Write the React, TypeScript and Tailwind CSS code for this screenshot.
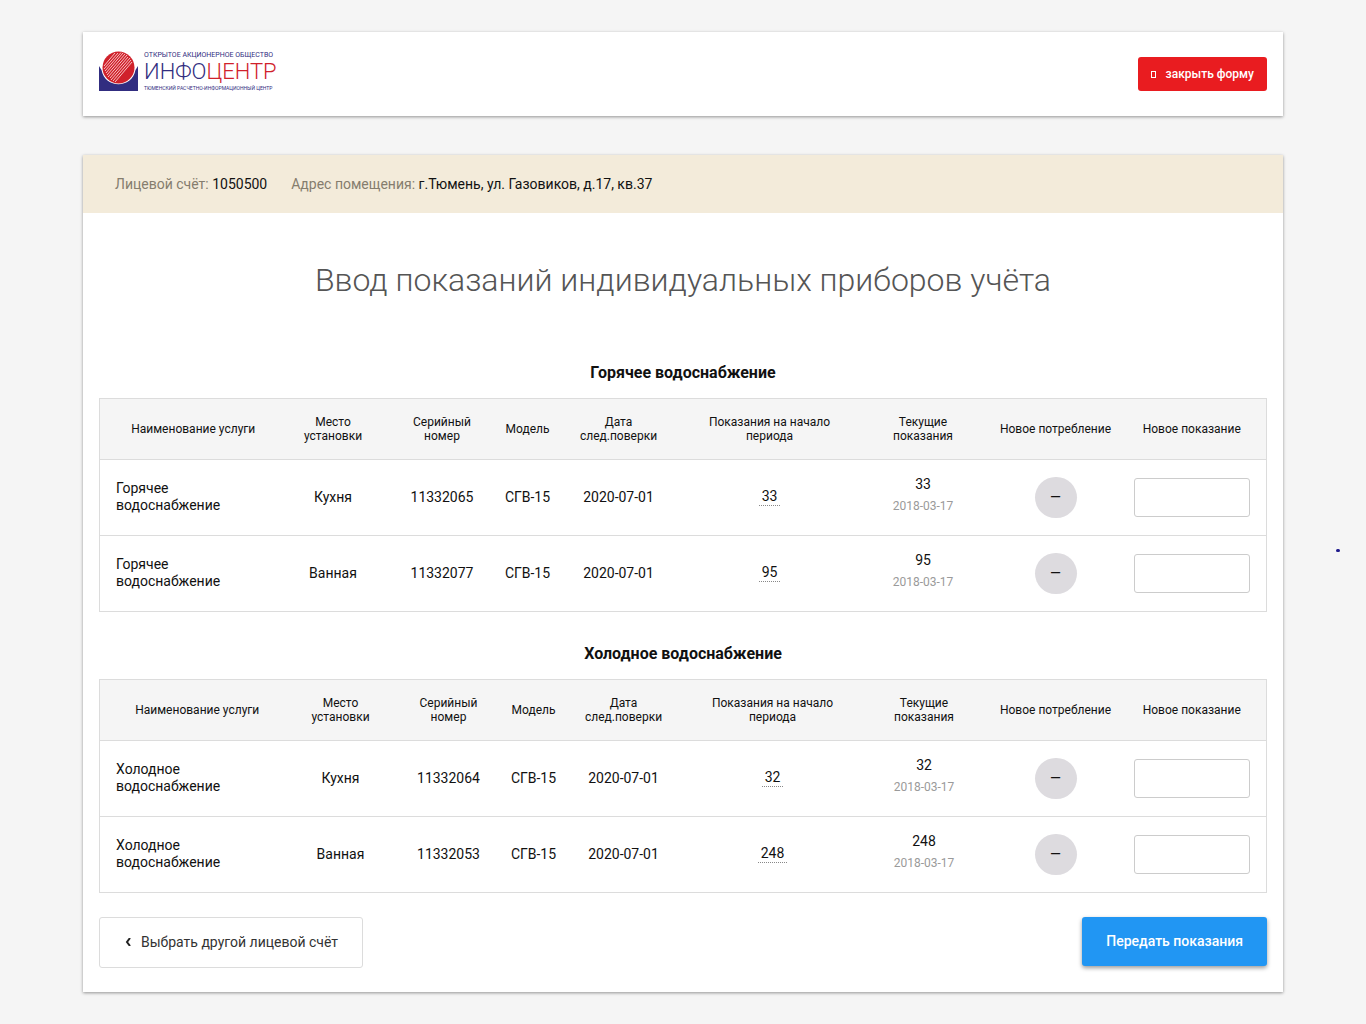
import { Fragment } from 'react';

type Meter = {
  service: string;
  place: string;
  serial: string;
  model: string;
  checkDate: string;
  start: string;
  current: string;
  currentDate: string;
};

const headings = [
  ['Наименование услуги'],
  ['Место', 'установки'],
  ['Серийный', 'номер'],
  ['Модель'],
  ['Дата', 'след.поверки'],
  ['Показания на начало', 'периода'],
  ['Текущие', 'показания'],
  ['Новое потребление'],
  ['Новое показание'],
];

const hotColumns = [187, 93, 125, 46, 136, 166, 141, 124, 149];
const coldColumns = [195, 92, 124, 46, 134, 164, 139, 124, 149];

const hotMeters: Meter[] = [
  { service: 'Горячее водоснабжение', place: 'Кухня', serial: '11332065', model: 'СГВ-15', checkDate: '2020-07-01', start: '33', current: '33', currentDate: '2018-03-17' },
  { service: 'Горячее водоснабжение', place: 'Ванная', serial: '11332077', model: 'СГВ-15', checkDate: '2020-07-01', start: '95', current: '95', currentDate: '2018-03-17' },
];

const coldMeters: Meter[] = [
  { service: 'Холодное водоснабжение', place: 'Кухня', serial: '11332064', model: 'СГВ-15', checkDate: '2020-07-01', start: '32', current: '32', currentDate: '2018-03-17' },
  { service: 'Холодное водоснабжение', place: 'Ванная', serial: '11332053', model: 'СГВ-15', checkDate: '2020-07-01', start: '248', current: '248', currentDate: '2018-03-17' },
];

function Logo() {
  return (
    <a href="#" className="flex items-center gap-1.5 pb-1.5">
      <svg className="h-10 w-[39px]" viewBox="0 0 39 40" aria-hidden="true">
        <path d="M0 15 L2.5 19 C6 38 33 38 36.5 19 L39 15 V40 H0 Z" fill="#312d80" />
        <circle cx="19.5" cy="16.5" r="16" fill="#d0212b" />
        <g stroke="#fbd5d5" strokeWidth="0.9">
          <path d="M5 15 L16 2 M5 18 L19 2 M6 20 L22 1.5 M7 22 L24 2 M8 24 L26 3 M9 26 L28 4 M11 27 L29 6 M12 29 L31 7 M14 30 L32 9 M16 31 L33 11" />
        </g>
      </svg>
      <span className="flex flex-col whitespace-nowrap text-[#312d80]">
        <span className="text-[7px] leading-[8px]">ОТКРЫТОЕ АКЦИОНЕРНОЕ ОБЩЕСТВО</span>
        <span className="text-[22px] leading-[26px] font-light">
          ИНФО<span className="text-[#d0212b]">ЦЕНТР</span>
        </span>
        <span className="text-[5px] leading-[7px]">ТЮМЕНСКИЙ РАСЧЕТНО-ИНФОРМАЦИОННЫЙ ЦЕНТР</span>
      </span>
    </a>
  );
}

function MeterTable({ title, columns, meters }: { title: string; columns: number[]; meters: Meter[] }) {
  return (
    <section className="mb-6">
      <h2 className="mb-[15px] pt-2 text-center text-base leading-5 font-bold">{title}</h2>
      <table className="w-full table-fixed border-collapse border border-[#dcdcdc] text-center">
        <colgroup>
          {columns.map((width, i) => (
            <col key={i} style={{ width }} />
          ))}
        </colgroup>
        <thead>
          <tr className="h-[61px] border-b border-[#dcdcdc] bg-[#f5f5f5]">
            {headings.map((lines) => (
              <th key={lines[0]} scope="col" className="text-xs leading-[14px] font-normal whitespace-nowrap">
                {lines.map((line, i) => (
                  <Fragment key={line}>
                    {i > 0 && <br />}
                    {line}
                  </Fragment>
                ))}
              </th>
            ))}
          </tr>
        </thead>
        <tbody>
          {meters.map((meter) => (
            <tr key={meter.serial} className="h-[76px] border-b border-[#dcdcdc] text-sm leading-[17px]">
              <td className="pr-10 pb-0.5 pl-4 text-left">{meter.service}</td>
              <td>{meter.place}</td>
              <td>{meter.serial}</td>
              <td className="whitespace-nowrap">{meter.model}</td>
              <td>{meter.checkDate}</td>
              <td className="pb-0.5">
                <span className="inline-block border-b border-dotted border-[#888] px-[3px]">{meter.start}</span>
              </td>
              <td className="pb-[5px]">
                <div>{meter.current}</div>
                <div className="mt-[5px] text-xs leading-[17px] text-[#9a9a9a]">{meter.currentDate}</div>
              </td>
              <td>
                <span className="inline-flex h-[41px] w-[42px] items-center justify-center rounded-full bg-[#dddbdf] align-middle">
                  —
                </span>
              </td>
              <td className="px-4">
                <input
                  type="text"
                  aria-label={`Новое показание ${meter.serial}`}
                  className="block h-[39px] w-full rounded-[3px] border border-[#ccc] bg-white px-2"
                />
              </td>
            </tr>
          ))}
        </tbody>
      </table>
    </section>
  );
}

export default function App() {
  return (
    <div className="relative min-h-screen bg-[#f5f5f5] px-4 py-8 font-['Roboto',sans-serif] text-[#111]">
      <div className="mx-auto max-w-[1200px]">
        <header className="mb-[39px] flex h-[84px] items-center justify-between bg-white px-4 shadow-[0_1px_3px_rgba(0,0,0,0.4)]">
          <Logo />
          <button
            type="button"
            className="flex h-[34px] items-center gap-2.5 rounded-[3px] bg-[#e91c20] px-[13px] text-xs font-medium text-white"
          >
            <span className="h-[7px] w-[5px] border border-white" />
            закрыть форму
          </button>
        </header>

        <main className="bg-white shadow-[0_1px_3px_rgba(0,0,0,0.4)]">
          <div className="flex h-[58px] items-center gap-6 bg-[#f3ebda] px-8 text-sm text-[#857d6e]">
            <p>
              Лицевой счёт: <span className="text-[#111]">1050500</span>
            </p>
            <p>
              Адрес помещения: <span className="text-[#111]">г.Тюмень, ул. Газовиков, д.17, кв.37</span>
            </p>
          </div>

          <div className="px-4 pb-6">
            <h1 className="pt-[47px] pb-[55px] text-center text-[32px] leading-10 font-light text-[#555]">
              Ввод показаний индивидуальных приборов учёта
            </h1>

            <MeterTable title="Горячее водоснабжение" columns={hotColumns} meters={hotMeters} />
            <MeterTable title="Холодное водоснабжение" columns={coldColumns} meters={coldMeters} />

            <div className="flex items-start justify-between">
              <button
                type="button"
                className="flex h-[51px] items-center gap-[9px] rounded-[3px] border border-[#dcdcdc] bg-white px-6 pb-0.5 text-sm text-[#333]"
              >
                <svg className="h-2 w-2" viewBox="0 0 8 8" fill="none" stroke="#222" strokeWidth="2" aria-hidden="true">
                  <path d="M6 0 L3 4 L6 8" />
                </svg>
                Выбрать другой лицевой счёт
              </button>
              <button
                type="button"
                className="h-[49px] rounded-[3px] bg-[#2196f3] px-6 pb-0.5 text-sm font-medium text-white shadow-[0_2px_4px_rgba(0,0,0,0.4)]"
              >
                Передать показания
              </button>
            </div>
          </div>
        </main>
      </div>
      <span aria-hidden="true" className="absolute top-[549px] right-[26px] h-[3px] w-1 rounded-full bg-[#1f1a8c]" />
    </div>
  );
}
